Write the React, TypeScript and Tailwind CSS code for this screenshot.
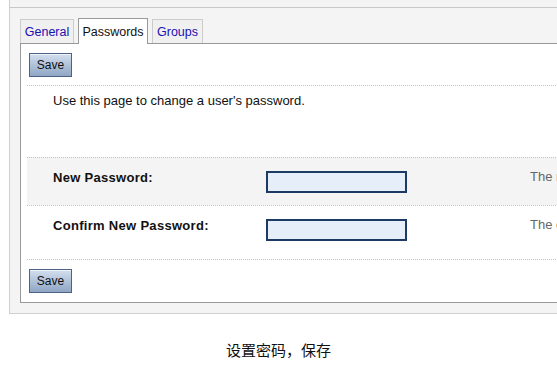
import React from "react";

const font = { fontFamily: '"Liberation Sans", "DejaVu Sans", sans-serif' };

function SaveButton() {
  return (
    <button
      type="button"
      className="h-[24px] w-[43px] border border-[#4d6285] bg-gradient-to-b from-[#d3dfee] to-[#8fa6c4] text-[12px] text-[#111] shadow-[inset_0_1px_0_#eef3fa]"
    >
      Save
    </button>
  );
}

type Field = { label: string; hint: string; shaded: boolean; height: string };

const fields: Field[] = [
  { label: "New Password:", hint: "The new password for this user.", shaded: true, height: "h-[48px]" },
  { label: "Confirm New Password:", hint: "The confirmation of the new password.", shaded: false, height: "h-[54px]" },
];

export default function App() {
  return (
    <div className="h-[370px] w-[557px] overflow-hidden bg-white text-[13px] text-[#111]" style={font}>
      <div className="ml-[9px] w-[600px] border-b border-l border-[#cfcfcf] bg-[#f4f4f4] pb-[10px]">
        <div className="h-[7px]" />
        <div className="border-t border-[#c8c8c8] pl-[10px] pt-[10px]">
          {/* tabs */}
          <div className="flex h-[25px] items-end gap-[4px] text-[12.5px]">
            <div className="flex h-[24px] w-[54px] items-center justify-center border border-b-0 border-[#cccccc] bg-[#f0f0f0] pt-[2px] text-[#1a0fb0]">
              General
            </div>
            <div className="relative top-px flex h-[26px] w-[70px] items-center justify-center border border-b-0 border-[#9a9a9a] bg-white pt-px text-[#111]">
              Passwords
            </div>
            <div className="flex h-[24px] w-[51px] items-center justify-center border border-b-0 border-[#cccccc] bg-[#f0f0f0] pt-[2px] text-[#1a0fb0]">
              Groups
            </div>
          </div>

          {/* panel */}
          <div className="border border-[#999999] bg-white pb-[9px]">
            <div className="pl-[8px] pt-[9px]">
              <SaveButton />
            </div>
            <div className="ml-[6px] mt-[8px] border-t border-dotted border-[#c4c4c4]">
              <p className="h-[71px] pl-[26px] pt-[7px] leading-[16px]">Use this page to change a user's password.</p>
              {fields.map((f) => (
                <div
                  key={f.label}
                  className={`grid ${f.height} grid-cols-[239px_264px_1fr] border-t border-dotted border-[#c4c4c4] ${f.shaded ? "bg-[#f4f4f4]" : "bg-white"}`}
                >
                  <div className="pl-[26px] pt-[12px] font-bold leading-[16px] tracking-[0.3px]">{f.label}</div>
                  <div className="pt-[13px]">
                    <div className="h-[22px] w-[141px] border-2 border-[#1d3a62] bg-[#e6eefa]" />
                  </div>
                  <div className="whitespace-nowrap pt-[11px] leading-[16px] text-[#666]">{f.hint}</div>
                </div>
              ))}
              <div className="border-t border-dotted border-[#c4c4c4] pt-[9px]">
                <div className="-ml-[6px] pl-[8px]">
                  <SaveButton />
                </div>
              </div>
            </div>
          </div>
        </div>
      </div>

      <p
        className="mt-[26px] text-center text-[15px] leading-[20px] text-[#111]"
        style={{ fontFamily: '"Noto Sans CJK SC", "Noto Sans", sans-serif' }}
      >
        设置密码，保存
      </p>
    </div>
  );
}
